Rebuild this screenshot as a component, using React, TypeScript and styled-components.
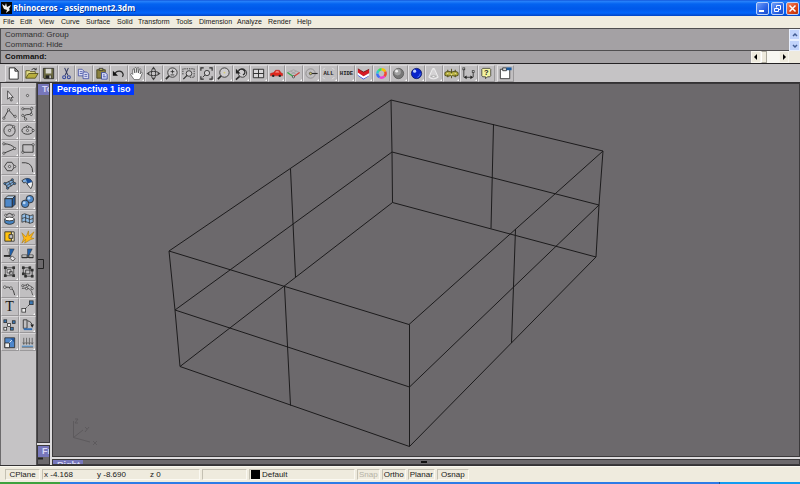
import React from "react";
import styled, { createGlobalStyle, css } from "styled-components";

const GlobalStyle = createGlobalStyle`
  * { box-sizing: border-box; }
  html, body, #root { height: 100%; }
  body {
    margin: 0;
    overflow: hidden;
    font-family: "Liberation Sans", Arial, sans-serif;
    font-size: 8px;
    color: #161616;
  }
  button { font: inherit; color: inherit; padding: 0; margin: 0; border: 0; background: none; }
`;

const Window = styled.div`
  display: flex;
  flex-direction: column;
  height: 100vh;
  background: #c5c3c5;
`;

const TitleBar = styled.header`
  display: flex;
  align-items: center;
  flex: none;
  height: 16px;
  padding: 0 1px;
  gap: 1px;
  background: linear-gradient(#0a46cf 0, #2a84fb 1px, #0463f0 4px, #0058ea 9px, #0366fb 13px, #0243c4 16px);
`;

const AppTitle = styled.h1`
  flex: 1;
  margin: 0;
  font: bold 8px/14px "Open Sans", sans-serif;
  color: #fff;
  text-shadow: 1px 1px 0 #07369a;
`;

const CaptionButton = styled.button<{ $close?: boolean }>`
  width: 13px;
  height: 13px;
  margin-left: 1px;
  border: 1px solid #bcd2fa;
  border-radius: 2px;
  background: ${(p) => (p.$close ? "linear-gradient(135deg,#f08a68,#dc4417 60%,#b83208)" : "linear-gradient(135deg,#6f9df8,#2a63e6 60%,#184ac8)")};
  svg { display: block; width: 11px; height: 11px; }
`;

const MenuBar = styled.nav`
  display: flex;
  align-items: center;
  flex: none;
  height: 12px;
  padding-left: 3px;
  gap: 4px;
  background: #f0ecdf;
  font-size: 7px;
  line-height: 12px;
`;

const MenuItem = styled.button<{ $w: number }>`
  flex: 0 0 ${(p) => p.$w}px;
  text-align: left;
  white-space: nowrap;
`;

const CommandArea = styled.section`
  flex: none;
  display: grid;
  grid-template-columns: minmax(0, 1fr) 11px;
  grid-template-rows: 22px 12px;
  border-top: 1px solid #504e50;
  border-left: 1px solid #504e50;
  background: #a4a1a4;
`;

const History = styled.div`
  padding: 1px 4px 0;
  line-height: 10px;
  color: #303030;
  border-bottom: 1px solid #504e50;
`;

const VScroll = styled.div`
  display: flex;
  flex-direction: column;
  background: #f3f2ec;
`;

const ScrollButton = styled.button<{ $blue?: boolean }>`
  flex: 1;
  display: grid;
  place-items: center;
  border: 1px solid ${(p) => (p.$blue ? "#e8effe" : "#f8f6ef")};
  background: ${(p) => (p.$blue ? "#c1d3fb" : "#eeeadd")};
  svg { display: block; width: 8px; height: 8px; }
`;

const CommandLine = styled.div`
  display: flex;
  align-items: stretch;
  padding-left: 4px;
  line-height: 11px;
`;

const CommandLabel = styled.label`
  font-weight: bold;
  color: #101010;
`;

const CommandInput = styled.input`
  flex: 1;
  min-width: 0;
  border: 0;
  outline: 0;
  background: transparent;
  font: inherit;
`;

const HScroll = styled.div`
  display: grid;
  grid-template-columns: 10px 6px 12px 10px;
  background: #f8f7f2;
`;

const ScrollThumb = styled.div`
  border: 1px solid #aaa79c;
  border-left-color: #fff;
  background: #eeeadd;
`;

const ScrollCorner = styled.div`
  background: #eeeadd;
`;

const ToolBar = styled.div`
  flex: none;
  display: flex;
  gap: 2px;
  height: 20px;
  padding: 1px 5px 0;
  border-top: 1px solid #242224;
  border-bottom: 1px solid #343234;
  background: #c5c3c5;
`;

const ToolRow = styled.div`
  display: grid;
  grid-template-columns: repeat(28, 1fr);
  width: 490px;
`;

const ToolButton = styled.button<{ $flyout?: boolean }>`
  position: relative;
  display: grid;
  place-items: center;
  min-width: 0;
  min-height: 0;
  overflow: hidden;
  border: solid;
  border-width: 1px;
  border-color: #d9d7d9 #9a989a #9a989a #e3e1e3;
  background: #c1bfc1;
  svg { display: block; width: 15px; height: 15px; }
  ${(p) =>
    p.$flyout &&
    css`
      &::after {
        content: "";
        position: absolute;
        right: 0;
        bottom: 0;
        border: 1px solid transparent;
        border-right-color: #fff;
        border-bottom-color: #fff;
      }
    `}
`;

const LastTool = styled.div`
  display: grid;
  width: 17px;
`;

const Workspace = styled.main`
  flex: 1;
  display: flex;
  min-height: 0;
  border-bottom: 1px solid #343234;
`;

const PaletteDock = styled.aside`
  flex: none;
  width: 37px;
  padding-top: 4px;
  border-left: 1px solid #6c6a6c;
  border-right: 1px solid #555355;
  background: #c5c3c5;
`;

const Palette = styled.div`
  display: grid;
  grid-template-columns: 1fr 1fr;
  grid-template-rows: repeat(15, 1fr);
  height: 264px;
`;

const SideViews = styled.div`
  flex: none;
  display: flex;
  flex-direction: column;
  gap: 2px;
  width: 13px;
  background: #dddbdd;
`;

const MainViews = styled.div`
  flex: 1;
  min-width: 0;
  display: flex;
  flex-direction: column;
  gap: 2px;
  padding-left: 2px;
  background: #dddbdd;
`;

const Viewport = styled.section<{ $h?: number }>`
  position: relative;
  flex: ${(p) => (p.$h ? `0 0 ${p.$h}px` : "1 1 0")};
  min-height: 0;
  overflow: hidden;
  border: 1px solid #3b393b;
  background: #6c696c;
`;

const ViewTitle = styled.h2<{ $active?: boolean }>`
  position: relative;
  width: max-content;
  margin: 0;
  padding: 0 3px 0 4px;
  font-size: 9px;
  line-height: 11px;
  color: ${(p) => (p.$active ? "#fff" : "#d8d8f4")};
  background: ${(p) => (p.$active ? "#0038ff" : "#7777bb")};
`;

const Scene = styled.svg`
  position: absolute;
  inset: 0;
  width: 100%;
  height: 100%;
`;

const StatusBar = styled.footer`
  flex: none;
  display: flex;
  align-items: stretch;
  gap: 2px;
  height: 16px;
  padding: 2px 0 2px 5px;
  background: #efebde;
  border-top: 1px solid #faf8f0;
`;

const statusCell = css<{ $w: number; $dim?: boolean }>`
  display: flex;
  align-items: center;
  flex: 0 0 ${(p) => p.$w}px;
  padding: 0 1px;
  gap: 2px;
  white-space: nowrap;
  border: solid;
  border-width: 1px;
  border-color: #c4c0b2 #fbf9f2 #fbf9f2 #c4c0b2;
  color: ${(p) => (p.$dim ? "#b5b2a6" : "#202020")};
`;

const StatusPane = styled.div<{ $w: number; $dim?: boolean }>`${statusCell}`;
const StatusButton = styled.button<{ $w: number; $dim?: boolean }>`${statusCell} justify-content: center;`;
const Coord = styled.span<{ $w: number }>`flex: 0 0 ${(p) => p.$w}px;`;
const Swatch = styled.span`width: 9px; height: 9px; background: #000;`;

const TaskBar = styled.div`
  flex: none;
  display: grid;
  grid-template-columns: 60px 1fr 81px;
  height: 2px;
  background: #2c7be6;
`;
const StartEdge = styled.div`background: #3da13d;`;
const TrayEdge = styled.div`grid-column: 3; background: #129bf1; border-left: 1px solid #114f99;`;

type Tool = [name: string, art: React.ReactNode, flyout?: boolean];

const Icon = ({ children }: { children: React.ReactNode }) => (
  <svg viewBox="0 0 16 16" fill="none" stroke="#2c2c2c" strokeWidth=".9" aria-hidden="true">{children}</svg>
);

const Label = ({ children }: { children: string }) => (
  <text x="8" y="10" textAnchor="middle" fontFamily="Liberation Mono, monospace" fontWeight="bold" fontSize="6" fill="#222" stroke="none">{children}</text>
);

const dots = (pts: number[][], fill = "#d8d6d8", r = 1.2) =>
  pts.map(([x, y]) => <circle key={`${x}-${y}`} cx={x} cy={y} r={r} fill={fill} strokeWidth=".7" />);

const squares = (pts: number[][], fill = "#eee", s = 3) =>
  pts.map(([x, y]) => <rect key={`${x}-${y}`} x={x} y={y} width={s} height={s} fill={fill} strokeWidth=".8" />);

const lens = (
  <>
    <circle cx="9" cy="7" r="5" fill="#cfcdcf" />
    <path d="M5.500 10.500 2 14" strokeWidth="1.700" />
  </>
);

const mainTools: Tool[] = [
  ["New", <path d="M3.500 2h6l3.500 3.500v8.500h-9.500z M9.500 2v3.500h3.500" fill="#fff" strokeWidth="1" />],
  ["Open", <><path d="M2 13V5h4l1 1h5v3" fill="#e4df89" stroke="#55511c" /><path d="m2 13 3-5h10l-3 5z" fill="#b8ae3e" stroke="#55511c" /><path d="M8 4q3-3 5 0m0-2v2h-2" /></>],
  ["Save", <><path d="M2.500 2.500h11v11h-10l-1-1z" fill="#6b6a40" /><path d="M5 3h6v5H5z" fill="#d8d8d0" stroke="none" /><path d="M5 10h6v3H5z" fill="#222" stroke="none" /><path d="M9 10h1.500v3H9z" fill="#ddd" stroke="none" /></>, true],
  ["Cut", <><path d="m6 2 3.500 8M10 2 6.500 10" stroke="#333a60" strokeWidth="1.100" /><circle cx="5.500" cy="12" r="1.600" stroke="#30449c" strokeWidth="1.100" /><circle cx="10.500" cy="12" r="1.600" stroke="#30449c" strokeWidth="1.100" /></>],
  ["Copy", <g stroke="#35439c" strokeWidth=".8"><path d="M2.500 3.500h4l2 2v5h-6z" fill="#dcdff4" /><path d="M7.500 6.500h4l2 2v5h-6z" fill="#dcdff4" /><path d="M4 6h3M4 8h3M9 9h3M9 11h3" /></g>],
  ["Paste", <><path d="M3 4h9v9H3z" fill="#8b8240" stroke="#42401c" /><path d="M5.500 2.500h4v2h-4z" fill="#ddd87c" /><path d="M8 7h4l2 2v5H8z" fill="#d7dcfa" stroke="#32429c" /><path d="M9.500 9.500h2m-2 2h3" stroke="#32429c" /></>],
  ["Undo", <><path d="M4 8.500c2-4 8-4 9 .5q0 1.500-1 2.500" strokeWidth="1.300" /><path d="M2 5v5.500h5.500z" fill="#111" stroke="none" /></>, true],
  ["Pan", <path d="M5.500 14.500 2 9.500c-1-1.500 1-2 2-.5L4 4c0-1.200 1.500-1.200 1.600 0L6.200 7.500 6.200 2.500c0-1.200 1.600-1.200 1.700 0L8.200 7l.6-4.700c.2-1.100 1.700-.9 1.600.2L10 7.500l1.200-4c.4-1 1.700-.5 1.500.5L11.800 8.500l1-1.500c.6-.8 1.700-.1 1.300.8L12.500 12 11 14.500z" fill="#fff" strokeWidth=".6" />, true],
  ["Rotate view", <><ellipse cx="8" cy="8" rx="5.500" ry="2.200" /><ellipse cx="8" cy="8" rx="2.200" ry="5.500" /><path d="m8 0.500 2 3H6zM8 15.500l2-3H6zM.5 8l3-2v4zM15.500 8l-3-2v4z" fill="#444" stroke="none" /></>, true],
  ["Zoom dynamic", <>{lens}<path d="M7 6h4M9 4v4M7 9.500h4" strokeWidth=".9" /></>],
  ["Zoom window", <><path d="M2 9V3h12v9H9" strokeDasharray="1.500 1" strokeWidth=".9" /><circle cx="8.500" cy="8" r="3" fill="#cfcdcf" /><path d="m6.500 10-4 4" strokeWidth="1.300" /></>],
  ["Zoom extents", <><path d="M2 5V2h3M11 2h3v3M14 11v3h-3M5 14H2v-3" strokeWidth="1.200" /><circle cx="8.500" cy="7.500" r="2.800" fill="#d4d2d4" /><path d="m6.500 9.500-2.500 2.500" /></>, true],
  ["Zoom selected", <>{lens}<circle cx="9" cy="7" r="1" fill="#d6cc72" stroke="none" /></>, true],
  ["Undo view", <><circle cx="9" cy="7.500" r="4.500" fill="#cfcdcf" /><path d="m6 11-4 3.500" strokeWidth="1.700" /><path d="M4.500 5c3-3.500 8-1 7 2.500q-.5 1.500-2 2" strokeWidth="1.300" /><path d="M2 3v5h5z" fill="#222" stroke="none" /></>, true],
  ["Four views", <path d="M2.500 3.500h11v9h-11zM8 3.500v9M2.500 8h11" fill="#dad8da" strokeWidth="1" />, true],
  ["Car", <><path d="M1.500 10.500V8l3.500-1 2-2.500h4l2 3 1.500.5v2.500z" fill="#e0261c" stroke="#b01f18" strokeWidth=".5" /><path d="m6.500 7 1-1.500h2.500l1 1.500z" fill="#f3a19b" stroke="none" /><circle cx="4.500" cy="10.500" r="1.300" fill="#222" stroke="none" /><circle cx="11.500" cy="10.500" r="1.300" fill="#222" stroke="none" /></>, true],
  ["Set CPlane", <><path d="m1.500 7 6.500-3 6.500 3-6.500 4zM5 5.500l6 3.500M11 5.500l-6 3.500" stroke="#999799" strokeWidth=".7" /><path d="m1.500 7 6.500 4.500" stroke="#34ac47" strokeWidth="1.200" /><path d="m8 11.500 6.500-4.500" stroke="#d43e37" strokeWidth="1.200" />{dots([[8, 11.5]])}</>, true],
  ["Object snap", <><circle cx="7" cy="8" r="5" stroke="#8b898b" />{dots([[7, 8]], "#d5cc68", 1.3)}<path d="M8.500 8h6" strokeWidth="1.200" /></>, true],
  ["Select all", <><path d="M2 4l2-2M12 2l2 2M2 12l2 2M12 14l2-2" stroke="#eee" strokeWidth=".8" /><Label>ALL</Label></>, true],
  ["Hide", <Label>HIDE</Label>, true],
  ["Layers", <g stroke="none"><path d="m2 10 6 4.500 6-4v-1l-6 3-6-4z" fill="#1837e5" /><path d="m2 7 6 4 6-3v2l-6 3.500-6-4z" fill="#fff" /><path d="m2 3 6 3.500 6-3v4l-6 3.500-6-4z" fill="#d71924" /><path d="m2 3 6 3.500 6-3" stroke="#611" strokeWidth=".8" /></g>, true],
  ["Object properties", <g strokeWidth="2.600"><path d="M8 3.500a4.500 4.500 0 0 1 4 2.500" stroke="#f3c300" /><path d="M12 6a4.500 4.500 0 0 1-1 5" stroke="#f04935" /><path d="M11 11a4.500 4.500 0 0 1-5 1" stroke="#eb41d2" /><path d="M6 12a4.500 4.500 0 0 1-2.500-4" stroke="#3f6df8" /><path d="M3.500 8A4.500 4.500 0 0 1 5 5" stroke="#27cdd4" /><path d="M5 5a4.500 4.500 0 0 1 3-1.500" stroke="#3ce15b" /></g>],
  ["Shade", <><circle cx="8" cy="8" r="5.500" fill="#777" strokeWidth=".8" stroke="#555" /><circle cx="7" cy="6.500" r="3.500" fill="#a2a2a2" stroke="none" /><circle cx="6" cy="5.500" r="1.500" fill="#eee" stroke="none" /></>, true],
  ["Render", <><circle cx="8" cy="8" r="5.500" fill="#0924cc" stroke="#101860" strokeWidth=".8" /><circle cx="6" cy="5.500" r="1.700" fill="#bfd0ff" stroke="none" /><path d="M9 12q3-1 3-4" stroke="#5684f8" /></>, true],
  ["Spotlight", <g stroke="#f4f4f4"><path d="m7 3-4 9q5 3.500 10 0l-4-9z" fill="#d4d2d4" /><path d="M7 3h2" /><path d="m5 11q3-2 6 0-3 2-6 0z" fill="#fff" stroke="#999" strokeWidth=".7" /></g>, true],
  ["Options", <><path d="M4 4v8M8 3v10M12 4v8M1 7l3-1.500 4 1 4-1 3 1.500v3l-3 1-4-1-4 1-3-1z" fill="#bcb43d" stroke="#524f1d" strokeWidth="1" /><path d="M4 7v2m4-1v2m4-3v2" stroke="#e8e28c" strokeWidth="1.500" /></>, true],
  ["Dimension", <><path d="M3 3v9M13 6v6M4 12h8" /><path d="m3 12 3-2v4zM13 12l-3-2v4z" fill="#222" stroke="none" />{squares([[2, 2], [12, 5]], "#eee", 2)}</>, true],
  ["Help", <><path d="M4 2.500h7.500l1 1v7l-1 1H9l-2 2v-2H4l-1-1v-7z" fill="#f3f3a0" strokeWidth=".8" /><text x="7.700" y="9.800" textAnchor="middle" fontSize="8" fontWeight="bold" fill="#222" stroke="none">?</text></>],
];

const sideTools: Tool[] = [
  ["Pointer", <path d="M6 3v9l2-2 1.500 4 1.500-.8-1.500-3.200h2.500z" fill="#e4e2e4" strokeWidth=".8" />, true],
  ["Point", dots([[8, 8]])],
  ["Polyline", <><path d="m2 13 5-9 7 8" />{dots([[2, 13], [7, 4], [14, 11]])}</>, true],
  ["Control point curve", <><path d="M3 3h7q5 3 0 6-7 0-5 4" />{dots([[3, 3], [12.5, 2.500], [12, 9], [3, 10], [6, 14]])}</>, true],
  ["Circle", <><circle cx="8" cy="8" r="6" /><path d="m8 8 4-4" strokeWidth=".5" />{dots([[8, 8], [12.5, 4]])}</>, true],
  ["Ellipse", <><ellipse cx="8" cy="8" rx="6" ry="4" />{dots([[8, 8], [8, 4], [14, 8]])}</>, true],
  ["Arc", <><path d="M2 3q8 0 12 5M2 13l12-5" strokeWidth=".9" />{dots([[2, 3], [2, 13], [13.5, 8]])}</>, true],
  ["Rectangle", <><path d="M3 4h11v8H3z" />{dots([[3, 12], [14, 4]])}</>, true],
  ["Polygon", <><path d="M5.500 3.500h5l3 4.500-3 4.500h-5L2.500 8z" />{dots([[8, 8], [13.5, 8]])}</>, true],
  ["Fillet curves", <path d="M2 4h4q7.500 1 7.500 10" />, true],
  ["Surface from points", <><path d="m3 8 8-4 2.500 4-7.500 5z" fill="#7eabd9" /><path d="m7 6 3 5M4.500 10.500l7.500-4" strokeWidth=".7" />{dots([[3, 8], [11, 4], [6, 13], [13.5, 8]], "#4679ad")}</>, true],
  ["Fillet surface", <><path d="M2 5q5-4 9-1.500L8 8.500q-2-3-4-1z" fill="#82b1e1" /><path d="M11 3.500q4.500 4 .5 10l-4-5z" fill="#f0f0f0" /><path d="M6 3q5-1.500 7 3.500L8 8z" fill="#1b4f97" stroke="none" /></>, true],
  ["Box", <><path d="m3 5 3-3h8L11 5z" fill="#b7d3ee" /><path d="M3 5h8v9H3z" fill="#4e88c9" /><path d="m11 5 3-3v9l-3 3z" fill="#235a9b" /></>, true],
  ["Boolean union", <><circle cx="10.500" cy="5.500" r="4" fill="#4e88c9" /><circle cx="5.500" cy="10.500" r="4" fill="#4e88c9" /><circle cx="9.500" cy="4.500" r="1.500" fill="#b9d6f3" stroke="none" /><circle cx="4.500" cy="9.500" r="1.500" fill="#b9d6f3" stroke="none" /></>, true],
  ["Extrude surface", <><path d="M3 8.500v4q5 3.500 10 0v-4z" fill="#4685c4" /><ellipse cx="8" cy="8.500" rx="5" ry="2" fill="#fff" /><path d="M4.500 4q3.500-3 7 0" />{dots([[4, 4.500], [12, 4.500]])}</>, true],
  ["Mesh", <path d="M2 4q3-2 6 0t6 0v8q-3 2-6 0t-6 0zM6 3.500v9M10 4.500v9M2 8q3-2 6 0t6 0" fill="#91bce5" strokeWidth=".8" />, true],
  ["Join", <><path d="M3 3h7v3H7.500v4H10v3H3z" fill="#ffc30f" /><path d="M10 3h3v10h-3v-3h1.500V6H10z" fill="#f5e9b8" /></>],
  ["Explode", <path d="m2 4 4.500 4.500L9 2l.5 5.500L15 3l-3.500 6.500 3.500.5-4 1.500-6 3.500 1-4-4 4 2-5z" fill="#ffb814" stroke="#a77712" strokeWidth=".6" />],
  ["Trim", <><path d="M8 2h5L9 10H8z" fill="#205fa9" strokeWidth=".5" /><path d="M8 2H6l2 8z" fill="#eee" strokeWidth=".4" /><path d="M2 9.500h7" strokeWidth="2" /><path d="m11 9.500 3 3-2.500 2.500-3-3z" fill="#e5e3e5" strokeWidth=".8" /></>],
  ["Split", <><path d="M8 2h5L9 10H8z" fill="#205fa9" strokeWidth=".5" /><path d="M2 8.500h5.500v3H2zM9.500 8.500H14v3H9.500z" fill="#eee" strokeWidth=".8" /><path d="M2 11h12" strokeWidth="1.300" /></>],
  ["Group", <><path d="M3.500 4h9v8.500h-9z" strokeWidth=".7" /><path d="M5.500 6h4v3.500h-4zM8 8h3v3H8z" fill="#dddbdd" strokeWidth=".7" />{squares([[2.5, 3], [11.5, 3], [2.500, 11.500], [11.500, 11.500]], "#333", 2)}</>, true],
  ["Ungroup", <><path d="M3.500 4h7v6.500h-7zM6 6.500h7V13H6z" strokeWidth=".8" />{squares([[2.500, 3], [9.500, 3], [2.500, 9.500], [12, 5.500], [12, 12], [5, 12]], "#333", 2)}</>],
  ["Edit points", <><path d="M2 6q10-3 11.500 8" />{dots([[3, 5.500], [9.500, 6.500]], "#e8e6e8", 1.4)}</>, true],
  ["Move control points", <><path d="M2 7q10-3 11.500 7M2 4.500q6-3 11 1" strokeWidth=".7" />{dots([[3, 4], [8, 3.500], [7, 7], [13, 7]])}</>, true],
  ["Text", <text x="8" y="13" textAnchor="middle" fontFamily="Liberation Serif, serif" fontSize="15" fill="#111" stroke="none">T</text>],
  ["Move", <><path d="M5 11 12 4" strokeDasharray="1.500 1" />{squares([[2, 10]], "#eee", 4)}{squares([[10, 2]], "#3976b3", 4)}</>, true],
  ["Copy objects", <>{squares([[2, 3], [11, 4], [9, 11]], "#3976b3", 3)}{squares([[6, 7], [2, 11]], "#f0f0f0", 3)}</>],
  ["Rotate", <><path d="M3.500 3h4v9h-4zM8 4q5 1 5 6" /><path d="M4 13h9" stroke="#356eb2" strokeWidth="2" /><path d="m11 8 2 3.500 2-3.500z" fill="#222" stroke="none" /></>, true],
  ["Scale", <><path d="M3 3h10.500v10.500H3z" fill="#4f87cb" /><path d="M9 3.500h4v4.500z" fill="#1f559e" stroke="none" /><path d="M3 8.500h5v5H3z" fill="#eee" /><path d="m8 8 2.500-2.500" stroke="#fff" /></>, true],
  ["Project", <><path d="M4 3v6M7 3v6M10 3v6M13 3v6" strokeWidth=".6" /><path d="M3 8l1 2 1-2M6 8l1 2 1-2M9 8l1 2 1-2M12 8l1 2 1-2" strokeWidth=".6" /><path d="M2 12h12" stroke="#6ca5db" strokeWidth="1.500" /><path d="M2 13h12" strokeWidth=".6" /></>, true],
];

const menus: [string, number][] = [
  ["File", 13], ["Edit", 15], ["View", 18], ["Curve", 21], ["Surface", 27], ["Solid", 17],
  ["Transform", 34], ["Tools", 19], ["Dimension", 34], ["Analyze", 27], ["Render", 25], ["Help", 16],
];

const ToolSet = ({ tools }: { tools: Tool[] }) => (
  <>
    {tools.map(([name, art, flyout]) => (
      <ToolButton key={name} type="button" aria-label={name} $flyout={flyout}>
        <Icon>{art}</Icon>
      </ToolButton>
    ))}
  </>
);

export default function App() {
  return (
    <Window>
      <GlobalStyle />
      <TitleBar>
        <svg width="11" height="12" viewBox="0 0 11 12" aria-hidden="true">
          <rect width="11" height="12" fill="#050505" />
          <path d="m1 2 3 2 1-3 1 4 4-2-2 4 1 1-4 3 1-3-3-1-1-2z" fill="#eee" />
        </svg>
        <AppTitle>Rhinoceros - assignment2.3dm</AppTitle>
        <CaptionButton aria-label="Minimize"><svg viewBox="0 0 11 11"><path d="M2 8h5" stroke="#fff" strokeWidth="2" /></svg></CaptionButton>
        <CaptionButton aria-label="Restore"><svg viewBox="0 0 11 11" fill="none" stroke="#fff"><path d="M2.500 5.500h4v3h-4zM4.500 4.500v-2h4v4h-2" /></svg></CaptionButton>
        <CaptionButton aria-label="Close" $close><svg viewBox="0 0 11 11"><path d="m2.500 2.500 6 6m0-6-6 6" stroke="#fff" strokeWidth="1.500" /></svg></CaptionButton>
      </TitleBar>
      <MenuBar>
        {menus.map(([name, w]) => <MenuItem key={name} type="button" $w={w}>{name}</MenuItem>)}
      </MenuBar>
      <CommandArea>
        <History>Command: Group<br />Command: Hide</History>
        <VScroll>
          <ScrollButton $blue aria-label="Scroll up"><svg viewBox="0 0 8 8"><path d="m2 5 2-2 2 2" fill="none" stroke="#435d94" strokeWidth="1.500" /></svg></ScrollButton>
          <ScrollButton $blue aria-label="Scroll down"><svg viewBox="0 0 8 8"><path d="m2 3 2 2 2-2" fill="none" stroke="#435d94" strokeWidth="1.500" /></svg></ScrollButton>
        </VScroll>
        <CommandLine>
          <CommandLabel htmlFor="command">Command:</CommandLabel>
          <CommandInput id="command" />
          <HScroll>
            <ScrollButton aria-label="Scroll left"><svg viewBox="0 0 8 8"><path d="M5 1v6L2 4z" /></svg></ScrollButton>
            <ScrollThumb />
            <span />
            <ScrollButton aria-label="Scroll right"><svg viewBox="0 0 8 8"><path d="M3 1v6l3-3z" /></svg></ScrollButton>
          </HScroll>
        </CommandLine>
        <ScrollCorner />
      </CommandArea>
      <ToolBar>
        <ToolRow><ToolSet tools={mainTools} /></ToolRow>
        <LastTool>
          <ToolButton type="button" aria-label="Properties">
            <Icon><path d="M2.500 3.500h10v10h-10z" fill="#fff" /><path d="M5 2h4v3H5z" fill="#ddd" /><path d="M9 1.500h5.500v3H9z" fill="#1b5a9d" stroke="none" /></Icon>
          </ToolButton>
        </LastTool>
      </ToolBar>
      <Workspace>
        <PaletteDock><Palette><ToolSet tools={sideTools} /></Palette></PaletteDock>
        <SideViews>
          <Viewport>
            <ViewTitle>Top</ViewTitle>
            <Scene aria-hidden="true"><path d="M0 175.500h5.500v9H0" fill="none" stroke="#222" /></Scene>
          </Viewport>
          <Viewport $h={20}>
            <ViewTitle>Front</ViewTitle>
            <Scene aria-hidden="true"><path d="M0 12.500h5" stroke="#222" strokeWidth="2" /></Scene>
          </Viewport>
        </SideViews>
        <MainViews>
          <Viewport>
            <Scene role="img" aria-label="Wireframe box">
              <g transform="translate(-53 -84)" fill="none" stroke="#1c1b1c">
                <path d="M169 251 391 100 603 151 409 324.500z" />
                <path d="M175 310 392 152 599 205 409.500 387z" />
                <path d="M180 366.500 392.500 202.500 596 257 409.500 446.500z" />
                <path d="M169 251 175 310 180 366.500M391 100 392 152 392.500 202.500M603 151 599 205 596 257M409.500 324.500V446.500" />
                <path d="M290.500 169 295.500 277M493.500 124 491 228.500M515.500 229 511.500 343M284.500 286.500 290.500 405.500" />
                <path d="M73.500 421v16.500L90 442M73.500 437.500 83 430M75 419h3l-3 4h3M85 427l2 2m2-2-4 5M93 441l4 4m0-4-4 4" stroke="#5d5a5d" />
              </g>
            </Scene>
            <ViewTitle $active>Perspective 1 iso</ViewTitle>
          </Viewport>
          <Viewport $h={6}>
            <ViewTitle>Right</ViewTitle>
            <Scene aria-hidden="true"><path d="M368 2h6" stroke="#111" strokeWidth="2" /></Scene>
          </Viewport>
        </MainViews>
      </Workspace>
      <StatusBar>
        <StatusButton $w={35}>CPlane</StatusButton>
        <StatusPane $w={158}>
          <Coord $w={51}>x -4.168</Coord><Coord $w={51}>y -8.690</Coord><Coord $w={40}>z 0</Coord>
        </StatusPane>
        <StatusPane $w={45} />
        <StatusPane $w={106}><Swatch />Default</StatusPane>
        <StatusButton $w={22} $dim>Snap</StatusButton>
        <StatusButton $w={24}>Ortho</StatusButton>
        <StatusButton $w={27}>Planar</StatusButton>
        <StatusButton $w={32}>Osnap</StatusButton>
      </StatusBar>
      <TaskBar><StartEdge /><TrayEdge /></TaskBar>
    </Window>
  );
}
